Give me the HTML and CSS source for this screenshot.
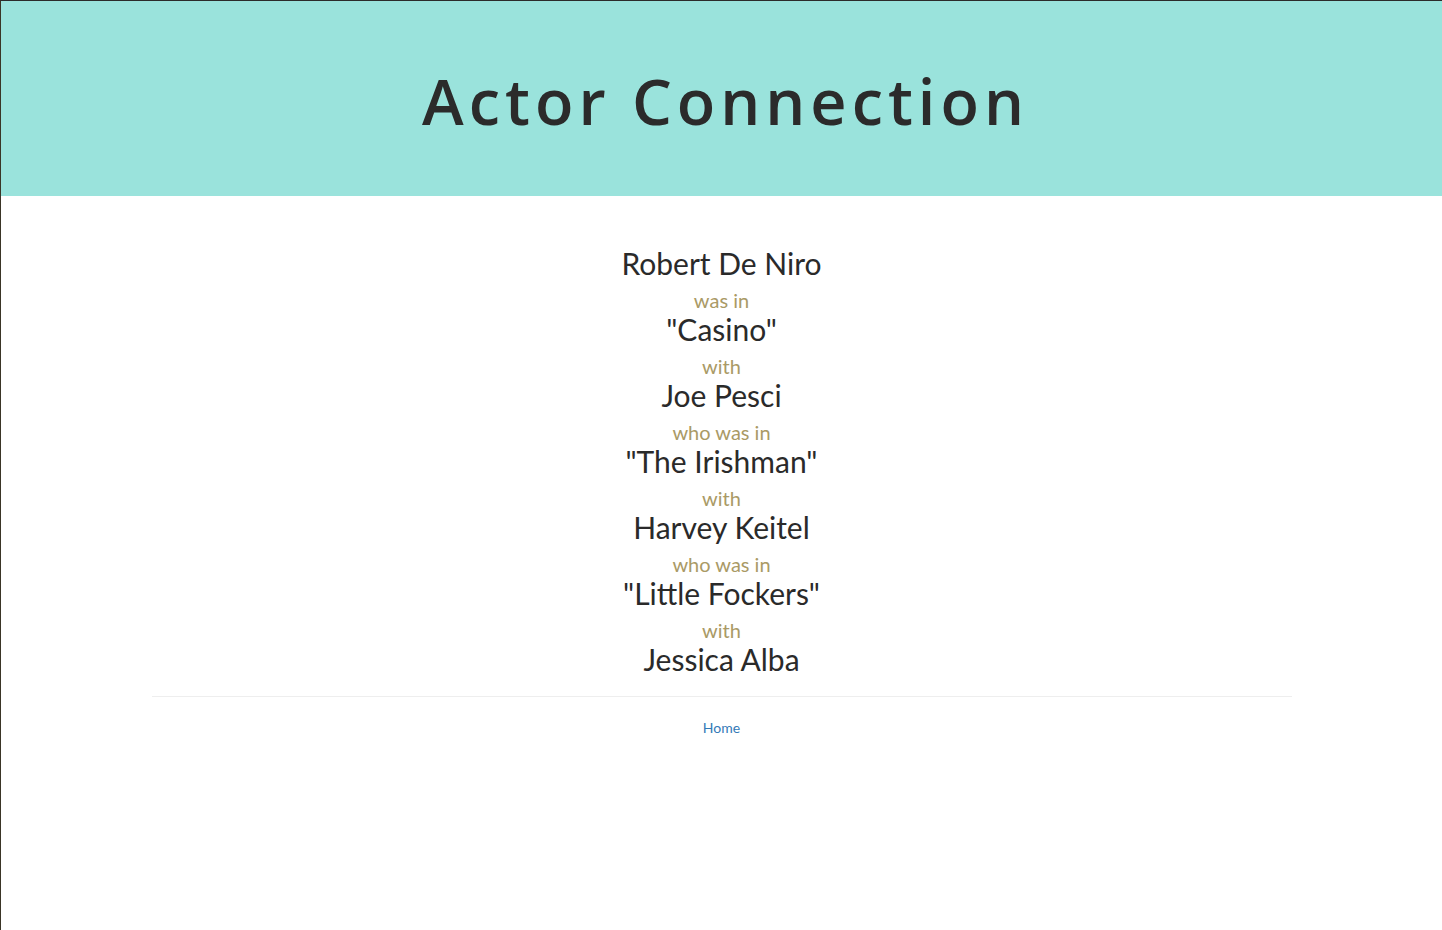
FILE: index.html
```html
<!DOCTYPE html>
<html>
<head>
<meta charset="utf-8">
<link rel="stylesheet" href="styles.css">
</head>
<body>
<div class="page">
  <header class="banner">
    <h1 class="title">Actor Connection</h1>
  </header>
  <main class="container">
    <div class="chain">
      <div class="name">Robert De Niro</div>
      <div class="link">was in</div>
      <div class="name">"Casino"</div>
      <div class="link">with</div>
      <div class="name">Joe Pesci</div>
      <div class="link">who was in</div>
      <div class="name">"The Irishman"</div>
      <div class="link">with</div>
      <div class="name">Harvey Keitel</div>
      <div class="link">who was in</div>
      <div class="name">"Little Fockers"</div>
      <div class="link">with</div>
      <div class="name">Jessica Alba</div>
    </div>
    <hr class="rule">
    <nav class="footer"><a class="home" href="#">Home</a></nav>
  </main>
</div>
</body>
</html>
```
FILE: styles.css
```css
html, body { margin: 0; padding: 0; }
body {
  font-family: Lato, "Open Sans", sans-serif;
  background: #fff;
  color: #2a2a2a;
}
.page {
  min-height: 929px;
  border-top: 1px solid #2b2b2b;
  border-left: 1px solid #3a3526;
}
.banner {
  background: #9ae3dc;
  height: 195px;
  display: flex;
  align-items: center;
  justify-content: center;
}
.title {
  margin: 0;
  font-family: "Open Sans", sans-serif;
  font-weight: 600;
  font-size: 63px;
  letter-spacing: 5px;
  color: #2b2b2b;
  line-height: 1;
  padding-top: 4px;
  padding-left: 8px;
}
.container {
  width: 1140px;
  margin: 0 auto;
  padding-top: 46px;
}
.chain {
  display: flex;
  flex-direction: column;
  align-items: center;
}
.name {
  font-size: 30px;
  line-height: 42px;
  color: #2a2a2a;
}
.link {
  font-size: 20px;
  line-height: 16px;
  padding-top: 8px;
  color: #aa9a66;
}
.rule {
  border: 0;
  border-top: 1px solid #eee;
  margin: 16px 0 22px;
}
.footer {
  text-align: center;
  font-size: 14px;
}
.home {
  color: #337ab7;
  text-decoration: none;
}
```
